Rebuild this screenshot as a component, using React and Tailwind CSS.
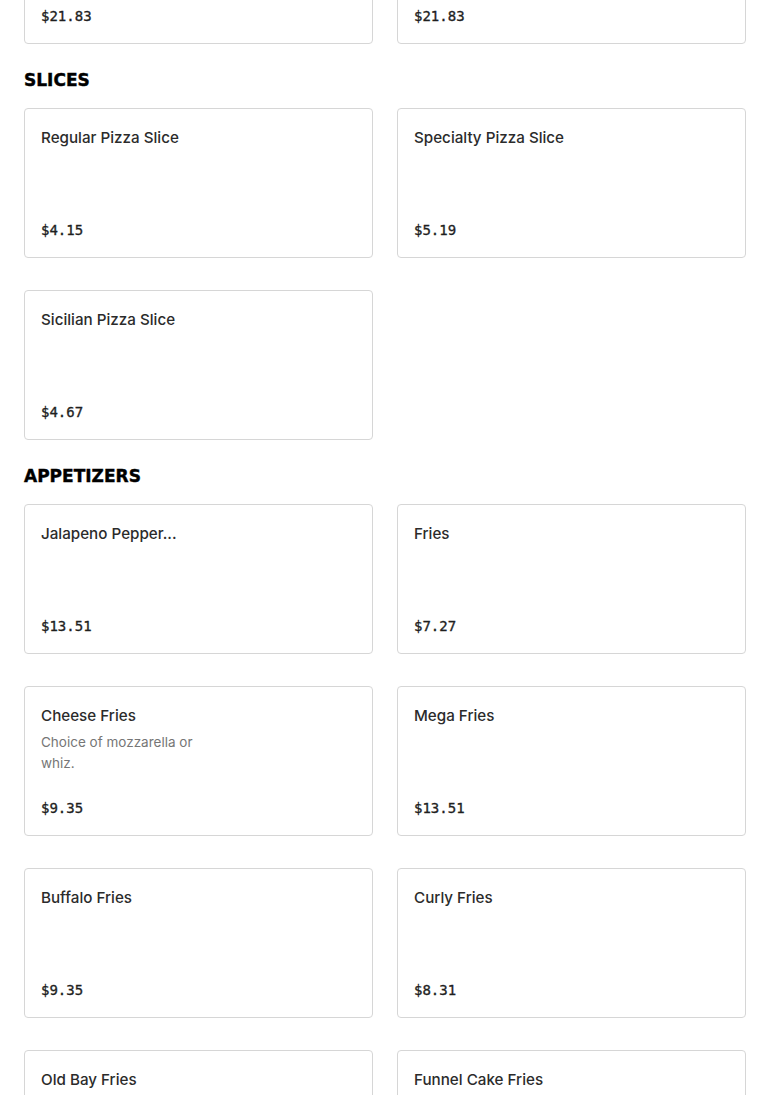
const sections = [
  {
    title: null,
    items: [
      { name: "Large Pizza", price: "$21.83" },
      { name: "Large White Pizza", price: "$21.83" },
    ],
  },
  {
    title: "SLICES",
    items: [
      { name: "Regular Pizza Slice", price: "$4.15" },
      { name: "Specialty Pizza Slice", price: "$5.19" },
      { name: "Sicilian Pizza Slice", price: "$4.67" },
    ],
  },
  {
    title: "APPETIZERS",
    items: [
      { name: "Jalapeno Pepper...", price: "$13.51" },
      { name: "Fries", price: "$7.27" },
      { name: "Cheese Fries", desc: "Choice of mozzarella or whiz.", price: "$9.35" },
      { name: "Mega Fries", price: "$13.51" },
      { name: "Buffalo Fries", price: "$9.35" },
      { name: "Curly Fries", price: "$8.31" },
      { name: "Old Bay Fries", price: "$8.31" },
      { name: "Funnel Cake Fries", price: "$8.31" },
    ],
  },
];

function ItemCard({ item }) {
  return (
    <div className="h-[150px] border border-[#d6d6d6] rounded-[4px] bg-white px-4 pt-[17px] pb-[15px] flex flex-col justify-between">
      <div>
        <p className="text-[15.2px] leading-6 font-medium text-[#2b2b2b] font-['Inter','Liberation_Sans',sans-serif]">
          {item.name}
        </p>
        {item.desc && (
          <p className="mt-1 w-[170px] text-[13.5px] leading-[21px] text-[#767676] font-['Inter','Liberation_Sans',sans-serif]">
            {item.desc}
          </p>
        )}
      </div>
      <p className="text-[14px] leading-6 text-[#1f1f1f] [-webkit-text-stroke:0.35px_#1f1f1f] font-['DejaVu_Sans_Mono','Liberation_Mono',monospace]">
        {item.price}
      </p>
    </div>
  );
}

export default function App() {
  return (
    <div className="w-[770px] h-[1095px] overflow-hidden bg-white">
      <div className="px-6 -mt-[106px]">
        {sections.map((section, i) => (
          <div key={i}>
            {section.title && (
              <h2 className="mt-6 mb-4 text-[17px] leading-6 font-bold text-black [-webkit-text-stroke:0.4px_#000] font-['DejaVu_Sans',sans-serif]">
                {section.title}
              </h2>
            )}
            <div className="grid grid-cols-2 gap-x-6 gap-y-8">
              {section.items.map((item) => (
                <ItemCard key={item.name} item={item} />
              ))}
            </div>
          </div>
        ))}
      </div>
    </div>
  );
}
